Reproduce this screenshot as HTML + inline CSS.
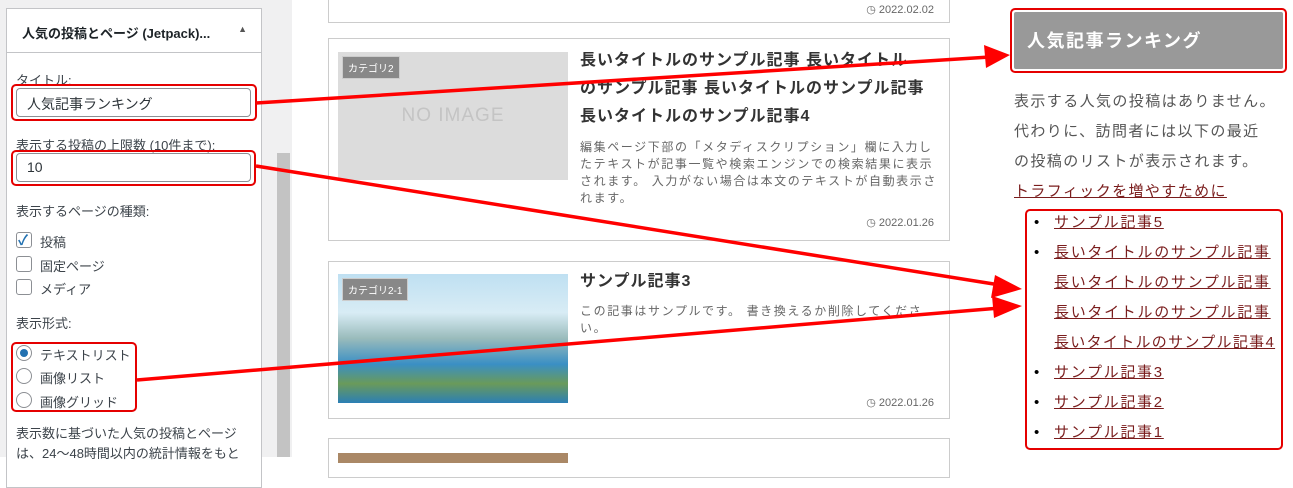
<!DOCTYPE html>
<html><head><meta charset="utf-8"><style>
*{box-sizing:border-box;margin:0;padding:0}
body{width:1293px;height:457px;overflow:hidden;background:#fff;font-family:"Liberation Sans","Noto Sans CJK JP",sans-serif;position:relative;color:#3c434a}
.a{position:absolute}
.lp{left:0;top:0;width:292px;height:457px;background:#f0f0f1}
.panel{left:6px;top:8px;width:256px;height:480px;background:#fff;border:1px solid #c3c4c7}
.ph{left:0;top:0;width:254px;height:44px;border-bottom:1px solid #c3c4c7;font-size:13px;font-weight:bold;color:#1d2327;padding:14px 15px}
.lbl{font-size:13px;color:#3c434a}
.inp{border:1px solid #8c8f94;border-radius:4px;background:#fff;font-size:14px;color:#2c3338;padding:5px 10px}
.cb{width:16px;height:16px;border:1px solid #8c8f94;border-radius:3px;background:#fff}
.rd{width:16px;height:16px;border:1px solid #8c8f94;border-radius:50%;background:#fff}
.red{border:2px solid #e50000;border-radius:5px}
.card{border:1px solid #ccc;background:#fff}
.cat{background:#888;color:#fff;font-size:10px;padding:3px 5px;border:1px solid #ccc}
.ti{font-size:16px;font-weight:bold;color:#333;line-height:28px;letter-spacing:1px;white-space:nowrap}
.ex{font-size:12px;color:#666;line-height:17px;letter-spacing:1.6px}
.dt{font-size:11px;color:#666}
.side{font-size:15px;color:#555;line-height:30px;letter-spacing:1.4px}
.lk{color:#7a1d1d;text-decoration:underline;font-size:15px;line-height:30px;letter-spacing:1.7px}
</style></head><body>
<div class="a lp"></div>
<div class="a" style="left:277px;top:153px;width:13px;height:304px;background:#c3c3c3"></div>
<div class="a panel">
 <div class="a ph">人気の投稿とページ (Jetpack)...<span style="position:absolute;right:14px;top:15px;font-size:9px;color:#555">▲</span></div>
</div>
<div class="a lbl" style="left:16px;top:70px">タイトル:</div>
<div class="a inp" style="left:16px;top:88px;width:235px;height:29px">人気記事ランキング</div>
<div class="a red" style="left:11px;top:84px;width:246px;height:37px"></div>
<div class="a lbl" style="left:16px;top:135px">表示する投稿の上限数 (10件まで):</div>
<div class="a inp" style="left:16px;top:153px;width:235px;height:29px">10</div>
<div class="a red" style="left:11px;top:150px;width:245px;height:36px"></div>
<div class="a lbl" style="left:16px;top:201px">表示するページの種類:</div>
<div class="a cb" style="left:16px;top:232px"><span style="position:absolute;left:1px;top:-3px;color:#2271b1;font-size:14px;font-weight:bold">✓</span></div>
<div class="a lbl" style="left:40px;top:232px">投稿</div>
<div class="a cb" style="left:16px;top:256px"></div><div class="a lbl" style="left:40px;top:256px">固定ページ</div>
<div class="a cb" style="left:16px;top:279px"></div><div class="a lbl" style="left:40px;top:279px">メディア</div>
<div class="a lbl" style="left:16px;top:313px">表示形式:</div>
<div class="a rd" style="left:16px;top:345px"><div style="position:absolute;left:3px;top:3px;width:8px;height:8px;border-radius:50%;background:#2271b1"></div></div>
<div class="a lbl" style="left:40px;top:345px">テキストリスト</div>
<div class="a rd" style="left:16px;top:368px"></div><div class="a lbl" style="left:40px;top:368px">画像リスト</div>
<div class="a rd" style="left:16px;top:392px"></div><div class="a lbl" style="left:40px;top:392px">画像グリッド</div>
<div class="a red" style="left:11px;top:342px;width:126px;height:70px"></div>
<div class="a lbl" style="left:16px;top:424px;width:240px;line-height:20px">表示数に基づいた人気の投稿とページは、24〜48時間以内の統計情報をもと</div>

<!-- cards -->
<div class="a card" style="left:328px;top:-10px;width:622px;height:33px"><span class="a dt" style="right:15px;top:12px">◷ 2022.02.02</span></div>
<div class="a card" style="left:328px;top:38px;width:622px;height:203px">
 <div class="a" style="left:9px;top:13px;width:230px;height:128px;background:#dcdcdc;color:#c4c4c4;font-size:19px;text-align:center;line-height:128px;letter-spacing:1px">NO IMAGE</div>
 <div class="a cat" style="left:13px;top:17px">カテゴリ2</div>
 <div class="a ti" style="left:251px;top:8px">長いタイトルのサンプル記事 長いタイトル<br>のサンプル記事 長いタイトルのサンプル記事<br>長いタイトルのサンプル記事4</div>
 <div class="a ex" style="left:251px;top:100px;width:362px">編集ページ下部の「メタディスクリプション」欄に入力したテキストが記事一覧や検索エンジンでの検索結果に表示されます。 入力がない場合は本文のテキストが自動表示されます。</div>
 <div class="a dt" style="right:15px;top:177px">◷ 2022.01.26</div>
</div>
<div class="a card" style="left:328px;top:261px;width:622px;height:158px">
 <div class="a" style="left:9px;top:12px;width:230px;height:129px;background:linear-gradient(180deg,#bfe0f2 0%,#d8ecf5 30%,#9bb 50%,#3a8fc4 70%,#6a9a5a 85%,#2b7fb5 100%)"></div>
 <div class="a cat" style="left:13px;top:16px">カテゴリ2-1</div>
 <div class="a ti" style="left:251px;top:6px">サンプル記事3</div>
 <div class="a ex" style="left:251px;top:41px;width:362px">この記事はサンプルです。 書き換えるか削除してください。</div>
 <div class="a dt" style="right:15px;top:134px">◷ 2022.01.26</div>
</div>
<div class="a card" style="left:328px;top:438px;width:622px;height:40px"><div class="a" style="left:9px;top:14px;width:230px;height:10px;background:#a86"></div></div>

<!-- sidebar -->
<div class="a" style="left:1010px;top:8px;width:277px;height:65px;border:2px solid #e50000;border-radius:5px;padding:2px"><div style="background:#999;height:100%;border-radius:2px;color:#fff;font-size:18px;font-weight:bold;padding:15px 13px;letter-spacing:1.5px">人気記事ランキング</div></div>
<div class="a side" style="left:1014px;top:87px;width:279px">表示する人気の投稿はありません。<br>代わりに、訪問者には以下の最近<br>の投稿のリストが表示されます。<br><span class="lk" style="letter-spacing:1.4px">トラフィックを増やすために</span></div>
<div class="a red" style="left:1025px;top:209px;width:258px;height:241px"></div>
<div class="a" style="left:1034px;top:208px;width:260px;font-size:15px;line-height:30px;color:#000">
<div><span style="display:inline-block;width:20px">•</span><span class="lk">サンプル記事5</span></div>
<div style="padding-left:20px;text-indent:-20px"><span style="display:inline-block;width:20px;text-indent:0">•</span><span class="lk">長いタイトルのサンプル記事</span><br><span class="lk">長いタイトルのサンプル記事</span><br><span class="lk">長いタイトルのサンプル記事</span><br><span class="lk" style="letter-spacing:1.3px">長いタイトルのサンプル記事4</span></div>
<div><span style="display:inline-block;width:20px">•</span><span class="lk">サンプル記事3</span></div>
<div><span style="display:inline-block;width:20px">•</span><span class="lk">サンプル記事2</span></div>
<div><span style="display:inline-block;width:20px">•</span><span class="lk">サンプル記事1</span></div>
</div>

<svg class="a" style="left:0;top:0" width="1293" height="457">
<g stroke="#f00" stroke-width="3.5" fill="none">
<line x1="256" y1="103" x2="990" y2="57"/>
<line x1="256" y1="166" x2="1000" y2="285"/>
<line x1="137" y1="380" x2="1000" y2="308"/>
</g>
<g fill="#f00">
<polygon points="1010,55 984,45 986,68"/>
<polygon points="1022,289 995,275 991,298"/>
<polygon points="1022,306 992,296 994,318"/>
</g>
</svg>
</body></html>
